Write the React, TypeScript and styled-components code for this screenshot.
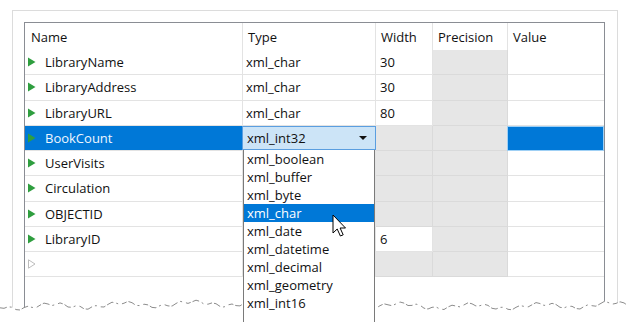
import React from "react";
import styled, { createGlobalStyle } from "styled-components";

const GlobalStyle = createGlobalStyle`
  html, body { margin: 0; padding: 0; background: #fff; }
  * { box-sizing: border-box; }
`;

type Field = {
  name: string;
  type: string;
  width?: string;
  widthGray?: boolean;
  selected?: boolean;
  empty?: boolean;
};

// type text of rows hidden under the open list is left out
const fields: Field[] = [
  { name: "LibraryName", type: "xml_char", width: "30" },
  { name: "LibraryAddress", type: "xml_char", width: "30" },
  { name: "LibraryURL", type: "xml_char", width: "80" },
  { name: "BookCount", type: "xml_int32", widthGray: true, selected: true },
  { name: "UserVisits", type: "", widthGray: true },
  { name: "Circulation", type: "", widthGray: true },
  { name: "OBJECTID", type: "", widthGray: true },
  { name: "LibraryID", type: "", width: "6" },
  { name: "", type: "", widthGray: true, empty: true },
];

const typeOptions = [
  "xml_boolean",
  "xml_buffer",
  "xml_byte",
  "xml_char",
  "xml_date",
  "xml_datetime",
  "xml_decimal",
  "xml_geometry",
  "xml_int16",
];

const COLS = "218px 133px 57px 75px 96px";

const Page = styled.div`
  position: relative;
  width: 628px;
  height: 322px;
  overflow: hidden;
  background: #fff;
  font-family: "Segoe UI", "Open Sans", "Noto Sans", sans-serif;
  font-size: 13px;
  color: #111;
`;

const Panel = styled.div`
  margin: 10px 0 0 12px;
  width: 606px;
  height: 312px;
  border: 1px solid #dcdcdc;
  border-bottom: none;
  padding: 11px 12px 0 11px;
`;

const Table = styled.div`
  width: 581px;
  height: 301px;
  border: 1px solid #8a8d94;
  border-bottom: none;
`;

const HeaderRow = styled.div`
  display: grid;
  grid-template-columns: ${COLS};
  height: 27px;
`;

const HeaderCell = styled.div`
  display: flex;
  align-items: center;
  padding-left: 5px;
  border-right: 1px solid #e3e3e3;
  &:first-child { padding-left: 6px; }
  &:last-child { border-right: none; }
`;

const Row = styled.div`
  display: grid;
  grid-template-columns: ${COLS};
  height: 25.25px;
`;

const Cell = styled.div<{ $gray?: boolean; $blue?: boolean; $pad?: number }>`
  position: relative;
  display: flex;
  align-items: center;
  padding-left: ${(p) => p.$pad ?? 4}px;
  background: ${(p) => (p.$blue ? "#0078d7" : p.$gray ? "#e6e6e6" : "#fff")};
  color: ${(p) => (p.$blue ? "#eef6ff" : "#111")};
  border-right: 1px solid ${(p) => (p.$gray ? "#dadada" : "#e3e3e3")};
  border-bottom: 1px solid ${(p) => (p.$gray ? "#dadada" : "#e3e3e3")};
  white-space: nowrap;
  &:last-child { border-right: none; }
`;

const SelectedValue = styled.div`
  position: absolute;
  inset: 0 0 -1px -1px;
  background: #0078d7;
  border: 1px solid #9fd0f5;
`;

const Expander = styled.svg`
  flex: none;
  width: 8px;
  height: 10px;
  margin-right: 9px;
`;

const Combo = styled.div`
  position: absolute;
  inset: 0 -1px 0 -1px;
  display: flex;
  align-items: center;
  justify-content: space-between;
  padding: 0 8px 0 4px;
  background: #cce4f7;
  border: 1px solid #5a9ee0;
`;

const ComboArrow = styled.span`
  width: 0;
  height: 0;
  border-left: 4px solid transparent;
  border-right: 4px solid transparent;
  border-top: 4px solid #111;
`;

const DropList = styled.div`
  position: absolute;
  top: 100%;
  left: 0;
  width: 132px;
  z-index: 30;
  padding-bottom: 20px;
  background: #fff;
  border: 1px solid #7a7a7a;
  border-top: none;
`;

const Option = styled.div<{ $active?: boolean }>`
  height: 18px;
  line-height: 18px;
  padding-left: 3px;
  background: ${(p) => (p.$active ? "#0078d7" : "#fff")};
  color: ${(p) => (p.$active ? "#fff" : "#111")};
`;

const Cursor = styled.svg`
  position: absolute;
  left: 332px;
  top: 214px;
  z-index: 40;
`;

const TornEdge = styled.svg`
  position: absolute;
  left: 0;
  top: 292px;
  z-index: 20;
`;

const tornPoints = (() => {
  const pts: string[] = [];
  for (let x = 0; x <= 630; x += 4) {
    const y =
      13 +
      Math.sin(x * 0.09) * 2.2 +
      Math.sin(x * 0.37 + 1) * 1.6 +
      Math.cos(x * 0.013) * 1.5;
    pts.push(`${x},${y.toFixed(1)}`);
  }
  return pts;
})();

const Arrow = ({ muted }: { muted?: boolean }) => (
  <Expander viewBox="0 0 8 10">
    {muted ? (
      <polygon points="0.5,0.8 7,5 0.5,9.2" fill="none" stroke="#bdbdbd" strokeWidth="1" />
    ) : (
      <polygon points="0,0.5 7.5,5 0,9.5" fill="#2f9e3f" />
    )}
  </Expander>
);

export default function App() {
  return (
    <Page>
      <GlobalStyle />
      <Panel>
        <Table>
          <HeaderRow>
            <HeaderCell>Name</HeaderCell>
            <HeaderCell>Type</HeaderCell>
            <HeaderCell>Width</HeaderCell>
            <HeaderCell>Precision</HeaderCell>
            <HeaderCell>Value</HeaderCell>
          </HeaderRow>
          {fields.map((f, i) => (
            <Row key={i}>
              <Cell $blue={f.selected} $pad={3}>
                <Arrow muted={f.empty} />
                {f.name}
              </Cell>
              <Cell $pad={3}>
                {f.selected ? (
                  <>
                    <Combo>
                      xml_int32
                      <ComboArrow />
                    </Combo>
                    <DropList>
                      {typeOptions.map((t) => (
                        <Option key={t} $active={t === "xml_char"}>
                          {t}
                        </Option>
                      ))}
                    </DropList>
                  </>
                ) : (
                  f.type
                )}
              </Cell>
              <Cell $gray={f.widthGray}>{f.width}</Cell>
              <Cell $gray />
              <Cell>{f.selected && <SelectedValue />}</Cell>
            </Row>
          ))}
        </Table>
      </Panel>
      <Cursor width="15" height="24" viewBox="0 0 15 24">
        <path
          d="M1 1 V19 L5.2 15 L8.4 22 L11.2 20.8 L8.1 14 H13.5 Z"
          fill="#fff"
          stroke="#000"
          strokeWidth="1"
          strokeLinejoin="round"
        />
      </Cursor>
      <TornEdge width="628" height="30" viewBox="0 0 628 30">
        <polygon points={`0,30 ${tornPoints.join(" ")} 630,30`} fill="#fff" />
        <polyline
          points={tornPoints.join(" ")}
          fill="none"
          stroke="#8c8c8c"
          strokeWidth="1"
          strokeDasharray="7 3 2 4 5 2"
        />
      </TornEdge>
    </Page>
  );
}
